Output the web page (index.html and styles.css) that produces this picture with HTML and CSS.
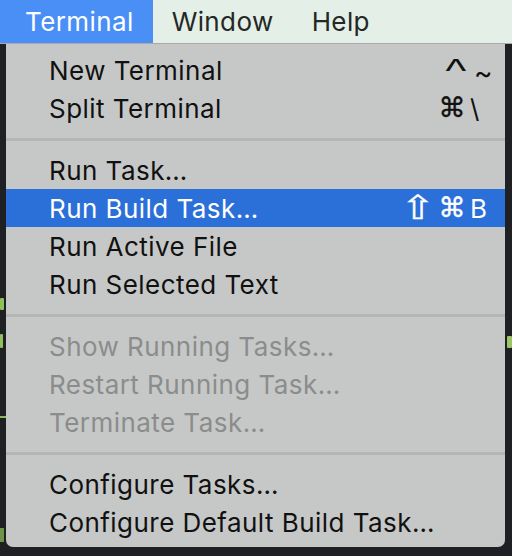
FILE: index.html
```html
<!DOCTYPE html>
<html>
<head>
<meta charset="utf-8">
<link rel="stylesheet" href="styles.css">
</head>
<body>
<div class="screen">
  <div class="menubar">
    <div class="mb-item first active">Terminal</div>
    <div class="mb-item">Window</div>
    <div class="mb-item">Help</div>
  </div>
  <div class="editor">
    <div class="code-row c1"><span class="glyph"></span></div>
    <div class="code-row c2"><span class="glyph tall"></span><span class="glyph right"></span></div>
    <div class="code-rule"></div>
    <div class="code-rule r2"></div>

    <div class="menu">
      <div class="item"><span class="label">New Terminal</span><span class="mods"><span class="sym ctrl">^</span></span><span class="key tilde">~</span></div>
      <div class="item"><span class="label">Split Terminal</span><span class="mods"><span class="sym">⌘</span></span><span class="key">\</span></div>
      <div class="sep"></div>
      <div class="item"><span class="label">Run Task…</span></div>
      <div class="item selected"><span class="label">Run Build Task…</span><span class="mods"><span class="sym shift">⇧</span><span class="sym">⌘</span></span><span class="key">B</span></div>
      <div class="item"><span class="label">Run Active File</span></div>
      <div class="item"><span class="label">Run Selected Text</span></div>
      <div class="sep"></div>
      <div class="item disabled"><span class="label">Show Running Tasks…</span></div>
      <div class="item disabled"><span class="label">Restart Running Task…</span></div>
      <div class="item disabled"><span class="label">Terminate Task…</span></div>
      <div class="sep"></div>
      <div class="item"><span class="label">Configure Tasks…</span></div>
      <div class="item"><span class="label">Configure Default Build Task…</span></div>
    </div>
  </div>
</div>
</body>
</html>
```

FILE: styles.css
```css
* { box-sizing: border-box; }
html, body { margin: 0; padding: 0; }
body {
  width: 512px;
  height: 556px;
  overflow: hidden;
  background: #1e1f22;
  font-family: Inter, "Liberation Sans", sans-serif;
}
.screen {
  width: 512px;
  height: 556px;
  display: flex;
  flex-direction: column;
}
.menubar {
  height: 44px;
  flex: none;
  display: flex;
  background: #e3efe7;
  border-bottom: 1px solid #a7aaa8;
}
.mb-item {
  height: 43px;
  display: flex;
  align-items: center;
  padding: 0 19px;
  font-size: 26px;
  letter-spacing: 0.4px;
  color: #232825;
}
.mb-item.first { padding-left: 25px; }
.mb-item.active {
  background: #4a8ff5;
  color: #ffffff;
}
.editor {
  position: relative;
  flex: 1;
  background: #1f2023;
}
.code-row {
  display: flex;
  justify-content: space-between;
  height: 18px;
}
.code-row.c1 { margin-top: 248px; }
.code-row.c2 { margin-top: 20px; }
.glyph {
  width: 4px;
  height: 12px;
  margin-top: 6px;
  background: #8fbf5e;
  border-radius: 1px;
}
.glyph.tall { height: 14px; margin-top: 4px; width: 3px; }
.glyph.right { width: 5px; background: #9cc46a; }
.code-rule {
  margin-top: 68px;
  width: 6px;
  height: 2px;
  background: #8db85a;
}
.code-rule.r2 { margin-top: 110px; height: 14px; width: 4px; background: #6f9448; }
.menu {
  position: absolute;
  top: 0;
  left: 6px;
  width: 499px;
  padding: 7px 0 6px;
  background: #c6c8c7;
  border-radius: 0 0 7px 7px;
  font-family: Inter, "Liberation Sans", sans-serif;
  color: #111111;
}
.item {
  height: 38px;
  display: flex;
  align-items: center;
  padding: 0 11px 0 43px;
  font-size: 26px;
  letter-spacing: 0.45px;
}
.label { flex: 1; white-space: nowrap; }
.mods {
  display: flex;
  align-items: center;
  gap: 4px;
  padding-right: 2px;
}
.sym {
  display: inline-block;
  font-family: "DejaVu Sans", sans-serif;
  font-size: 27px;
  line-height: 28px;
  -webkit-text-stroke: 0.4px currentColor;
}
.sym.ctrl {
  font-family: "Liberation Sans", sans-serif;
  font-size: 34px;
  line-height: 24px;
  height: 24px;
  transform: scaleX(1.3);
  -webkit-text-stroke: 0;
  margin-right: 2px;
}
.sym.shift {
  font-size: 33px;
  line-height: 28px;
  transform: scaleX(1.25);
  margin: 0 2px 0 2px;
  -webkit-text-stroke: 0.3px currentColor;
}
.key {
  width: 24px;
  margin-left: 2px;
}
.key.tilde { padding-top: 6px; padding-left: 4px; font-size: 28px; }
.item.selected {
  background: #2b6fd9;
  color: #ffffff;
}
.item.disabled { color: #8b8c8c; }
.sep {
  height: 24px;
  padding-top: 11px;
}
.sep::before {
  content: "";
  display: block;
  height: 3px;
  background: #b4b6b5;
}
```
